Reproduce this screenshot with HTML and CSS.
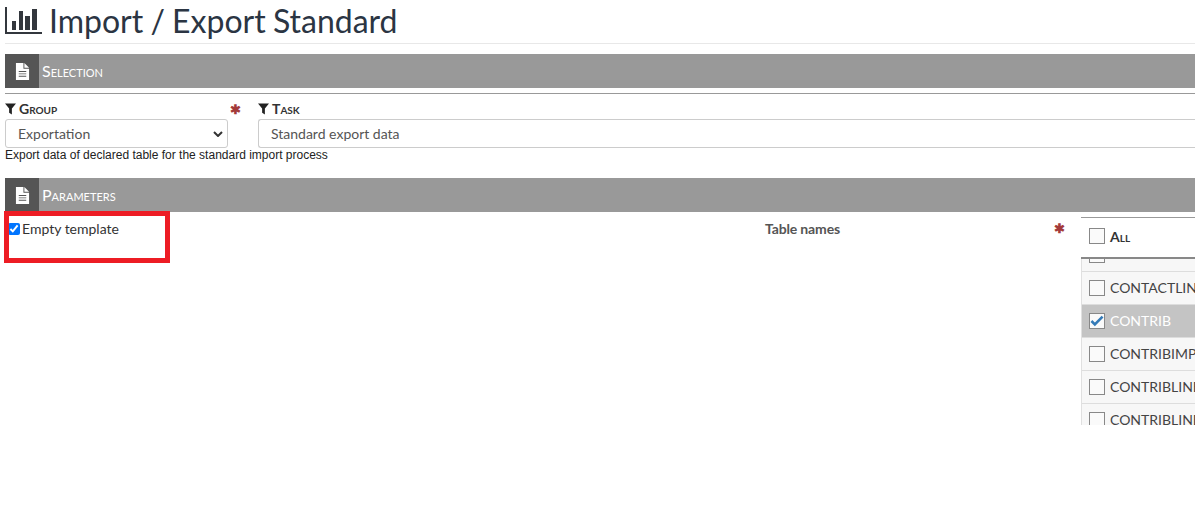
FILE: index.html
```html
<!DOCTYPE html>
<html>
<head>
    <title>Import / Export Standard</title>
    <meta charset="UTF-8" />
    <link rel="stylesheet" href="styles.css">
</head>
<body>
<div class="page">
    <h1 class="page_title">
        <svg class="title_icon" viewBox="0 0 37 27" width="37" height="27">
            <path d="M0 0h2v25h35v2H0z" />
            <path d="M7 14h4v9H7zM14 4h4v19h-4zM20 9h5v14h-5zM27 2h5v21h-5z" />
        </svg>
        Import / Export Standard
    </h1>

    <div class="section">
        <div class="section_icon">
            <svg viewBox="0 0 16 18" width="15" height="17"><path d="M1 0h8v6h6v12H1z M10 0l5 5h-5z M4 8.500v1h8v-1z M4 11v1h8v-1z M4 13.500v1h8v-1z" fill-rule="evenodd" /></svg>
        </div>
        <div class="section_title">Selection</div>
    </div>
    <div class="section_rule"></div>

    <div class="selection_row">
        <div class="field group_field">
            <label class="field_label">
                <svg class="filter" viewBox="0 0 12 12" width="11" height="12"><path d="M0 0h12L7.500 5.500V12L4.500 10V5.500z" /></svg>Group
            </label>
            <div class="select_box">
                <span>Exportation</span>
                <svg class="chevron" viewBox="0 0 10 6" width="10" height="6"><path d="M1 1l4 4 4-4" /></svg>
            </div>
        </div>
        <div class="star star_group">&#10033;</div>
        <div class="field task_field">
            <label class="field_label">
                <svg class="filter" viewBox="0 0 12 12" width="11" height="12"><path d="M0 0h12L7.500 5.500V12L4.500 10V5.500z" /></svg>Task
            </label>
            <div class="input_box">Standard export data</div>
        </div>
    </div>
    <div class="help">Export data of declared table for the standard import process</div>

    <div class="section section_params">
        <div class="section_icon">
            <svg viewBox="0 0 16 18" width="15" height="17"><path d="M1 0h8v6h6v12H1z M10 0l5 5h-5z M4 8.500v1h8v-1z M4 11v1h8v-1z M4 13.500v1h8v-1z" fill-rule="evenodd" /></svg>
        </div>
        <div class="section_title">Parameters</div>
    </div>

    <div class="params_row">
        <label class="empty_template">
            <input type="checkbox" checked />Empty template
        </label>
        <div class="table_names">Table names</div>
        <div class="star star_tables">&#10033;</div>
        <div class="table_list">
            <div class="list_head"><span class="box"></span>All</div>
            <div class="list_scroll">
                <div class="list_row cut_row"><span class="box"></span></div>
                <div class="list_row"><span class="box"></span>CONTACTLINE</div>
                <div class="list_row picked">
                    <span class="box">
                        <svg viewBox="0 0 16 14" width="14" height="12"><path d="M1.500 7l4 4 9-9" /></svg>
                    </span>CONTRIB
                </div>
                <div class="list_row"><span class="box"></span>CONTRIBIMPORT</div>
                <div class="list_row"><span class="box"></span>CONTRIBLINE</div>
                <div class="list_row"><span class="box"></span>CONTRIBLINETAX</div>
            </div>
        </div>
        <div class="red_mark"></div>
    </div>
</div>
</body>
</html>
```

FILE: styles.css
```css
html, body {
    margin: 0;
    height: 100%;
    background: white;
    overflow: hidden;
}

.page {
    width: 1190px;
    padding-left: 5px;
    font-family: Lato, "Open Sans", sans-serif;
    color: #333;
}

.page_title {
    margin: 0;
    height: 44px;
    box-sizing: border-box;
    border-bottom: 1px solid #e8e8e8;
    font-size: 32px;
    font-weight: 400;
    line-height: 42px;
    word-spacing: -1px;
    color: #2b3543;
    white-space: nowrap;
    display: flex;
    align-items: flex-start;
    gap: 7px;
}

.title_icon {
    fill: #33373d;
    margin-top: 7px;
    flex: none;
}

.section {
    margin-top: 10px;
    height: 34px;
    background: #999;
    display: flex;
    align-items: center;
    color: white;
}

.section_params {
    margin-top: 16px;
}

.section_icon {
    width: 34px;
    height: 34px;
    background: #555;
    display: flex;
    align-items: center;
    justify-content: center;
    fill: white;
}

.section_title {
    margin-left: 3px;
    margin-top: -2px;
    font-variant: small-caps;
    font-size: 16px;
}

.section_rule {
    margin-top: 5px;
    border-top: 1px solid #999;
}

.selection_row {
    margin-top: 5px;
    display: flex;
}

.field_label {
    display: flex;
    align-items: center;
    gap: 3px;
    height: 19px;
    font-variant: small-caps;
    font-weight: 700;
    font-size: 14px;
    color: #333;
}

.filter {
    fill: #222;
}

.group_field {
    width: 223px;
    flex: none;
}

.select_box, .input_box {
    margin-top: 1px;
    height: 29px;
    box-sizing: border-box;
    border: 1px solid #ccc;
    border-radius: 3px;
    font-size: 14px;
    line-height: 28px;
    color: #555;
    padding-left: 12px;
}

/* the field runs on past the window, no right edge shows */
.input_box {
    border-right: none;
    border-radius: 3px 0 0 3px;
}

.select_box {
    display: flex;
    justify-content: space-between;
    align-items: center;
    padding-right: 4px;
}

.chevron {
    fill: none;
    stroke: #333;
    stroke-width: 2;
}

.star {
    font-size: 13px;
    color: #a33a3a;
    font-weight: 700;
}

.star_group {
    width: 30px;
    flex: none;
    padding-left: 2px;
    box-sizing: border-box;
    line-height: 20px;
}

.task_field {
    flex: 1;
}

.help {
    font-family: "Liberation Sans", Arial, sans-serif;
    font-size: 12px;
    line-height: 14px;
    color: #222;
}

.params_row {
    position: relative;
    height: 213px;
    display: flex;
}

.empty_template {
    width: 760px;
    flex: none;
    padding-top: 10px;
    font-size: 14px;
    line-height: 14px;
    display: flex;
    align-items: flex-start;
    height: 20px;
    color: #333;
}

.empty_template input {
    margin: 1px 2px 0 3px;
    width: 12px;
    height: 12px;
}

.table_names {
    width: 289px;
    flex: none;
    padding-top: 8px;
    font-size: 14px;
    line-height: 17px;
    font-weight: 700;
    letter-spacing: -0.15px;
    color: #555;
}

.star_tables {
    width: 27px;
    flex: none;
    line-height: 17px;
    padding-top: 8px;
}

.table_list {
    margin-top: 5px;
    width: 114px;
    flex: none;
    overflow: hidden;
    border-top: 1px solid #999;
}

.list_head {
    height: 41px;
    box-sizing: border-box;
    border-bottom: 2px solid #888;
    display: flex;
    align-items: center;
    padding-left: 8px;
    padding-bottom: 3px;
    font-variant: small-caps;
    font-weight: 700;
    font-size: 14px;
    color: #333;
}

.list_scroll {
    height: 166px;
    overflow: hidden;
    border-left: 1px solid #e0e0e0;
    background: #f7f7f7;
}

.list_row {
    height: 33px;
    box-sizing: border-box;
    border-bottom: 1px solid #ddd;
    display: flex;
    align-items: center;
    padding-left: 7px;
    padding-bottom: 1px;
    font-size: 14px;
    color: #444;
    white-space: nowrap;
}

.cut_row {
    height: 13px;
    align-items: flex-end;
    padding-bottom: 8px;
}

.box {
    width: 14px;
    height: 14px;
    border: 1px solid #888;
    background: #fafafa;
    margin-right: 5px;
    display: flex;
    align-items: center;
    justify-content: center;
    flex: none;
}

.box svg {
    fill: none;
    stroke: #337ab7;
    stroke-width: 3;
}

.picked {
    background: #c4c4c4;
    color: white;
}

.red_mark {
    position: absolute;
    left: -1px;
    top: -1px;
    width: 156px;
    height: 42px;
    border: 5px solid #ed1c24;
}
```
